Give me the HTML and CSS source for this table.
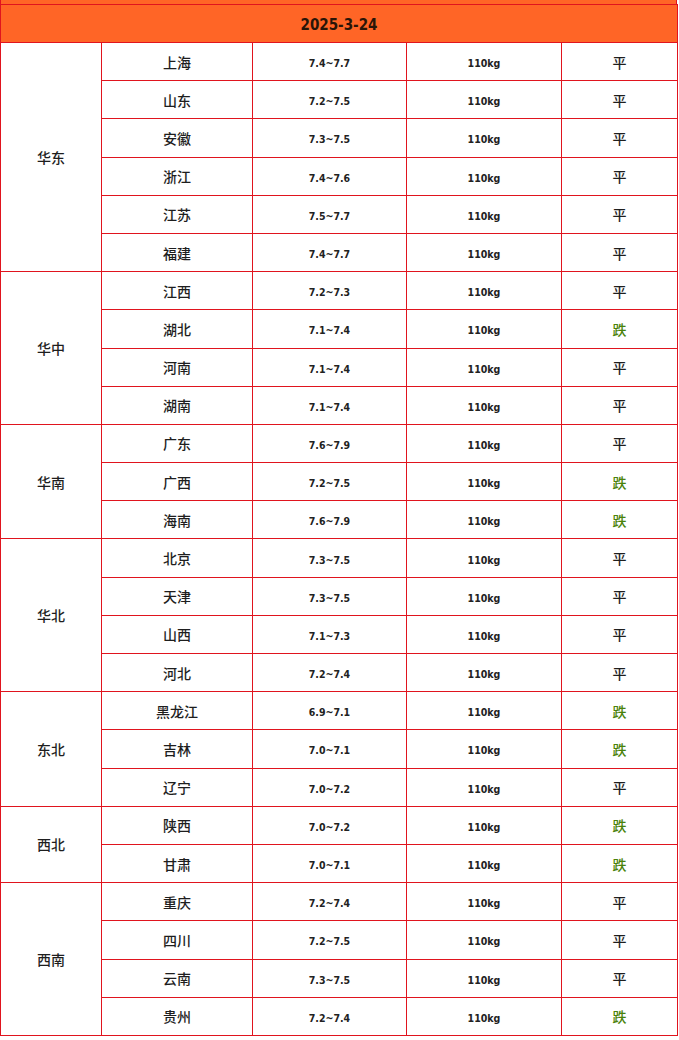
FILE: index.html
```html
<!DOCTYPE html>
<html lang="zh">
<head>
<meta charset="utf-8">
<title>2025-3-24</title>
<link rel="stylesheet" href="styles.css">
</head>
<body>
<div class="top-edge"></div>
<table class="price-table">
  <colgroup>
    <col class="c-region"><col class="c-prov"><col class="c-price"><col class="c-weight"><col class="c-trend">
  </colgroup>
  <thead>
    <tr><th colspan="5" class="title">2025-3-24</th></tr>
  </thead>
  <tbody>
    <tr><td rowspan="6" class="region">华东</td><td class="prov">上海</td><td class="num">7.4~7.7</td><td class="num">110kg</td><td class="trend">平</td></tr>
    <tr><td class="prov">山东</td><td class="num">7.2~7.5</td><td class="num">110kg</td><td class="trend">平</td></tr>
    <tr><td class="prov">安徽</td><td class="num">7.3~7.5</td><td class="num">110kg</td><td class="trend">平</td></tr>
    <tr><td class="prov">浙江</td><td class="num">7.4~7.6</td><td class="num">110kg</td><td class="trend">平</td></tr>
    <tr><td class="prov">江苏</td><td class="num">7.5~7.7</td><td class="num">110kg</td><td class="trend">平</td></tr>
    <tr><td class="prov">福建</td><td class="num">7.4~7.7</td><td class="num">110kg</td><td class="trend">平</td></tr>

    <tr><td rowspan="4" class="region">华中</td><td class="prov">江西</td><td class="num">7.2~7.3</td><td class="num">110kg</td><td class="trend">平</td></tr>
    <tr><td class="prov">湖北</td><td class="num">7.1~7.4</td><td class="num">110kg</td><td class="trend down">跌</td></tr>
    <tr><td class="prov">河南</td><td class="num">7.1~7.4</td><td class="num">110kg</td><td class="trend">平</td></tr>
    <tr><td class="prov">湖南</td><td class="num">7.1~7.4</td><td class="num">110kg</td><td class="trend">平</td></tr>

    <tr><td rowspan="3" class="region">华南</td><td class="prov">广东</td><td class="num">7.6~7.9</td><td class="num">110kg</td><td class="trend">平</td></tr>
    <tr><td class="prov">广西</td><td class="num">7.2~7.5</td><td class="num">110kg</td><td class="trend down">跌</td></tr>
    <tr><td class="prov">海南</td><td class="num">7.6~7.9</td><td class="num">110kg</td><td class="trend down">跌</td></tr>

    <tr><td rowspan="4" class="region">华北</td><td class="prov">北京</td><td class="num">7.3~7.5</td><td class="num">110kg</td><td class="trend">平</td></tr>
    <tr><td class="prov">天津</td><td class="num">7.3~7.5</td><td class="num">110kg</td><td class="trend">平</td></tr>
    <tr><td class="prov">山西</td><td class="num">7.1~7.3</td><td class="num">110kg</td><td class="trend">平</td></tr>
    <tr><td class="prov">河北</td><td class="num">7.2~7.4</td><td class="num">110kg</td><td class="trend">平</td></tr>

    <tr><td rowspan="3" class="region">东北</td><td class="prov">黑龙江</td><td class="num">6.9~7.1</td><td class="num">110kg</td><td class="trend down">跌</td></tr>
    <tr><td class="prov">吉林</td><td class="num">7.0~7.1</td><td class="num">110kg</td><td class="trend down">跌</td></tr>
    <tr><td class="prov">辽宁</td><td class="num">7.0~7.2</td><td class="num">110kg</td><td class="trend">平</td></tr>

    <tr><td rowspan="2" class="region">西北</td><td class="prov">陕西</td><td class="num">7.0~7.2</td><td class="num">110kg</td><td class="trend down">跌</td></tr>
    <tr><td class="prov">甘肃</td><td class="num">7.0~7.1</td><td class="num">110kg</td><td class="trend down">跌</td></tr>

    <tr><td rowspan="4" class="region">西南</td><td class="prov">重庆</td><td class="num">7.2~7.4</td><td class="num">110kg</td><td class="trend">平</td></tr>
    <tr><td class="prov">四川</td><td class="num">7.2~7.5</td><td class="num">110kg</td><td class="trend">平</td></tr>
    <tr><td class="prov">云南</td><td class="num">7.3~7.5</td><td class="num">110kg</td><td class="trend">平</td></tr>
    <tr><td class="prov">贵州</td><td class="num">7.2~7.4</td><td class="num">110kg</td><td class="trend down">跌</td></tr>
  </tbody>
</table>
</body>
</html>
```

FILE: styles.css
```css
html, body {
  margin: 0;
  padding: 0;
  background: #ffffff;
}

body {
  font-family: "Noto Sans CJK SC", "DejaVu Sans", sans-serif;
  color: #222222;
}

.top-edge {
  box-sizing: border-box;
  width: 677px;
  height: 4px;
  background: #ff6526;
  border-left: 1px solid #e0141e;
  border-right: 1px solid #e0141e;
}

.price-table {
  width: 677px;
  border-collapse: collapse;
  table-layout: fixed;
}

.c-region { width: 101px; }
.c-prov { width: 151px; }
.c-price { width: 154px; }
.c-weight { width: 155px; }
.c-trend { width: 116px; }

.price-table th,
.price-table td {
  border: 1px solid #e0141e;
  padding: 0;
  text-align: center;
  vertical-align: middle;
  height: 37.19px;
}

.price-table th.title {
  background: #ff6526;
  color: #2a1508;
  font-family: "DejaVu Sans Condensed", "DejaVu Sans", sans-serif;
  font-stretch: condensed;
  font-weight: bold;
  font-size: 15px;
  height: 35px;
  padding-top: 2px;
}

.region,
.prov,
.trend {
  font-family: "Noto Sans CJK SC", sans-serif;
  font-size: 14px;
  font-weight: 500;
  color: #1e1e1e;
}

.num {
  font-family: "DejaVu Sans Condensed", "DejaVu Sans", sans-serif;
  font-stretch: condensed;
  font-weight: bold;
  font-size: 10.5px;
  color: #222222;
}

.price-table td.num {
  padding-top: 3px;
  height: 30px;
}

.trend.down {
  color: #4a820a;
}
```
